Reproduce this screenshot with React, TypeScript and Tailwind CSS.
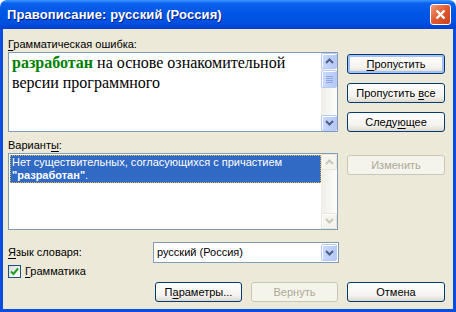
import React from "react";

const Chevron: React.FC<{ dir: "up" | "down"; color: string }> = ({ dir, color }) => (
  <svg width="9" height="6" viewBox="0 0 9 6">
    <polyline
      points={dir === "up" ? "1,5 4.5,1.5 8,5" : "1,1 4.5,4.5 8,1"}
      fill="none"
      stroke={color}
      strokeWidth="2"
    />
  </svg>
);

const ScrollBar: React.FC<{ enabled: boolean }> = ({ enabled }) => {
  const btn = enabled
    ? "bg-[linear-gradient(to_right,#cbdafc,#b5c9f7)] border border-[#b7caf5] shadow-[inset_1px_1px_0_#ffffff]"
    : "bg-[#f5f4ee] border border-[#e8e6da] shadow-[inset_1px_1px_0_#ffffff]";
  const arrow = enabled ? "#4d6185" : "#c9c7ba";
  return (
    <div className="w-[16px] h-full flex flex-col bg-[linear-gradient(to_right,#efeee8,#fdfdfa)]">
      <div className={`h-[16px] rounded-[2px] flex items-center justify-center ${btn}`}>
        <Chevron dir="up" color={arrow} />
      </div>
      {enabled && (
        <div className={`h-[18px] mt-[1px] rounded-[2px] flex flex-col items-center justify-center gap-[1px] ${btn}`}>
          <div className="w-[7px] h-[1px] bg-[#8ca7e6]" />
          <div className="w-[7px] h-[1px] bg-[#8ca7e6]" />
          <div className="w-[7px] h-[1px] bg-[#8ca7e6]" />
          <div className="w-[7px] h-[1px] bg-[#8ca7e6]" />
        </div>
      )}
      <div className="flex-1" />
      <div className={`h-[16px] rounded-[2px] flex items-center justify-center ${btn}`}>
        <Chevron dir="down" color={arrow} />
      </div>
    </div>
  );
};

const Button: React.FC<{
  children: React.ReactNode;
  w: string;
  disabled?: boolean;
  isDefault?: boolean;
}> = ({ children, w, disabled, isDefault }) => (
  <div
    className={`${w} h-[20px] rounded-[3px] border flex items-center justify-center ${
      disabled
        ? "border-[#c9c7ba] bg-[#f5f4ea] text-[#aca899]"
        : "border-[#003c74] bg-[linear-gradient(to_bottom,#ffffff,#f3f2ee_70%,#dcd8cc)] text-black"
    } ${isDefault ? "shadow-[inset_0_0_0_2px_#a4c0f4]" : ""}`}
  >
    {children}
  </div>
);

const U: React.FC<{ children: React.ReactNode }> = ({ children }) => (
  <span className="underline underline-offset-[2px]">{children}</span>
);

export default function App() {
  return (
    <div className="w-[456px] h-[312px] flex flex-col font-['Liberation_Sans',sans-serif] text-[11px] text-black">
      <div className="h-[29px] shrink-0 rounded-t-[7px] flex items-center justify-between pl-[7px] pr-[5px] bg-[linear-gradient(to_bottom,#3d95ff_0%,#0b62ec_12%,#0055e5_45%,#0050e0_80%,#0040cf_100%)]">
        <span className="text-white font-bold text-[13px] [text-shadow:1px_1px_0_#0a1e8c] tracking-[0.1px]">
          Правописание: русский (Россия)
        </span>
        <div className="w-[21px] h-[21px] rounded-[3px] border border-white bg-[linear-gradient(135deg,#f09a7c,#e0582e_50%,#c8421a)] flex items-center justify-center">
          <svg width="11" height="11" viewBox="0 0 11 11">
            <line x1="1.5" y1="1.5" x2="9.5" y2="9.5" stroke="white" strokeWidth="2.4" />
            <line x1="9.5" y1="1.5" x2="1.5" y2="9.5" stroke="white" strokeWidth="2.4" />
          </svg>
        </div>
      </div>

      <div className="flex-1 flex flex-col bg-[#ece9d8] border-x-[3px] border-b-[3px] border-[#0a4fe0] pl-[5px] pr-[8px] pt-[8px]">
        <div className="flex gap-[9px]">
          <div className="w-[330px] flex flex-col">
            <div className="h-[15px] leading-[15px]">
              <U>Г</U>рамматическая ошибка:
            </div>
            <div className="h-[80px] border border-[#7f9db9] bg-white flex">
              <div className="flex-1 pl-[3px] font-['Liberation_Serif',serif] text-[16px] leading-[20px]">
                <span className="font-bold text-[#008000]">разработан</span> на основе ознакомительной
                версии программного
              </div>
              <ScrollBar enabled />
            </div>
          </div>
          <div className="w-[98px] pt-[17px] flex flex-col gap-[9px]">
            <Button w="w-[98px]" isDefault>
              <span>
                <U>П</U>ропустить
              </span>
            </Button>
            <Button w="w-[98px]">
              <span>
                Пропустить <U>в</U>се
              </span>
            </Button>
            <Button w="w-[98px]">
              <span>
                Следу<U>ю</U>щее
              </span>
            </Button>
          </div>
        </div>

        <div className="flex gap-[9px] mt-[6px]">
          <div className="w-[330px] flex flex-col">
            <div className="h-[15px] leading-[15px]">
              Вариант<U>ы</U>:
            </div>
            <div className="h-[77px] border border-[#7f9db9] bg-white flex">
              <div className="flex-1 pl-[1px] pt-[1px]">
                <div className="bg-[#316ac5] text-white border border-dotted border-[#e8b040] leading-[13px] pl-[1px]">
                  Нет существительных, согласующихся с причастием
                  <br />
                  <span className="font-bold">"разработан"</span>.
                </div>
              </div>
              <ScrollBar enabled={false} />
            </div>
          </div>
          <div className="w-[98px] pt-[17px]">
            <Button w="w-[98px]" disabled>
              Изменить
            </Button>
          </div>
        </div>

        <div className="flex items-center mt-[12px] h-[21px]">
          <div className="w-[145px]">
            <U>Я</U>зык словаря:
          </div>
          <div className="w-[186px] h-[21px] border border-[#7f9db9] bg-white flex items-center pl-[3px] pr-[1px]">
            <span className="flex-1">русский (Россия)</span>
            <div className="w-[16px] h-[17px] rounded-[2px] border border-[#b7caf5] bg-[linear-gradient(to_right,#cbdafc,#b5c9f7)] shadow-[inset_1px_1px_0_#ffffff] flex items-center justify-center">
              <Chevron dir="down" color="#4d6185" />
            </div>
          </div>
        </div>

        <div className="flex items-center mt-[2px] h-[13px] gap-[4px]">
          <div className="w-[13px] h-[13px] border border-[#1c5180] bg-[linear-gradient(135deg,#dcdcd7,#ffffff)] flex items-center justify-center">
            <svg width="9" height="9" viewBox="0 0 9 9">
              <polyline points="1,4.5 3.5,7 8,1.5" fill="none" stroke="#21a121" strokeWidth="2" />
            </svg>
          </div>
          <span>
            <U>Г</U>рамматика
          </span>
        </div>

        <div className="flex justify-end gap-[9px] mt-[4px]">
          <Button w="w-[87px]">
            <span>
              П<U>а</U>раметры...
            </span>
          </Button>
          <Button w="w-[87px]" disabled>
            Вернуть
          </Button>
          <Button w="w-[98px]">Отмена</Button>
        </div>
      </div>
    </div>
  );
}
